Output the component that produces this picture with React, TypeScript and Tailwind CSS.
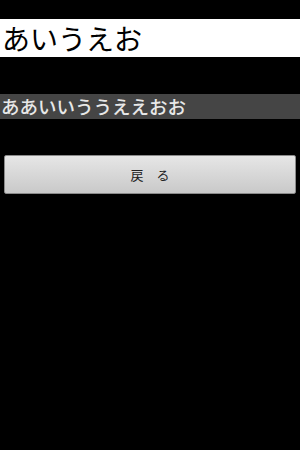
import React from "react";

const jp = { fontFamily: '"Noto Sans CJK JP", "DejaVu Sans", sans-serif' };

export default function App() {
  return (
    <div className="w-[300px] h-[450px] bg-black overflow-hidden" style={jp}>
      <div className="pt-[19px]">
        <div className="h-[38px] bg-white flex items-center pl-[2px]">
          <span className="text-[28px] leading-none text-black">あいうえお</span>
        </div>
      </div>
      <div className="mt-[37px] h-[25px] bg-[#454545] flex items-center pl-[1px]">
        <span className="text-[18.5px] leading-none font-medium text-[#e8e8e8]">ああいいううええおお</span>
      </div>
      <div className="mt-[36px] px-[4px]">
        <button
          type="button"
          className="w-[292px] h-[39px] rounded-[2px] border border-[#8a8a8a] bg-gradient-to-b from-[#e6e6e6] to-[#c9c9c9] flex items-center justify-center"
        >
          <span className="text-[13px] leading-none text-[#222]">戻　る</span>
        </button>
      </div>
    </div>
  );
}
